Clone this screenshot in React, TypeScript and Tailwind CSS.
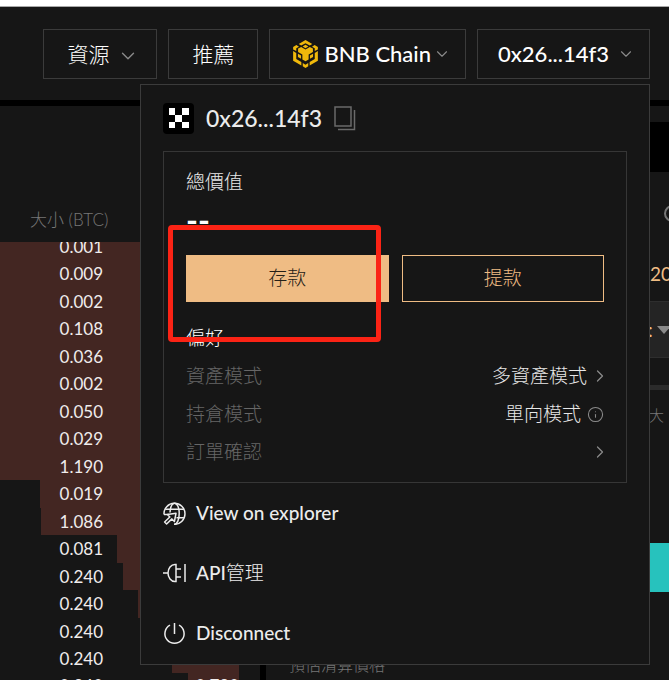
import React from 'react';
import { ChevronDown, ChevronRight, Info } from 'lucide-react';

const asks = [
  { size: '0.001', depth: 240 },
  { size: '0.009', depth: 240 },
  { size: '0.002', depth: 240 },
  { size: '0.108', depth: 240 },
  { size: '0.036', depth: 240 },
  { size: '0.002', depth: 240 },
  { size: '0.050', depth: 240 },
  { size: '0.029', depth: 240 },
  { size: '1.190', depth: 240 },
  { size: '0.019', depth: 200 },
  { size: '1.086', depth: 199 },
  { size: '0.081', depth: 123 },
  { size: '0.240', depth: 117 },
  { size: '0.240', depth: 101 },
  { size: '0.240', depth: 84 },
  { size: '0.240', depth: 67 },
  { size: '0.240', depth: 51, total: '0.720' },
];

const MAX_DEPTH = 240;

const BnbLogo = () => (
  <svg width="25" height="28" viewBox="0 0 38 43" fill="#f0b90b" aria-hidden="true">
    <path d="M8.600 6 19 0l10.400 6-3.800 2.300L19 4.900l-6.600 3.400z" />
    <path d="M14.600 10 19 7.400l4.400 2.600L19 12.600z" />
    <path d="M30.400 13l-4.800-2.200L19 14.600l-6.600-3.800L7.600 13v5.500l6.600 3.800v7.700l4.800 2.700 4.800-2.700v-7.700l6.600-3.800z" />
    <path d="M0 10.700 5 7.600l4 2.600-4.200 2.600v4L0 14.500zM38 10.700 33 7.600l-4 2.600 4.200 2.600v4L38 14.500z" />
    <path d="M0 17l4.800 2.800v9.200l7.800 4.600v5.400L0 32zM38 17l-4.800 2.800v9.200l-7.800 4.600v5.400L38 32z" />
    <path d="M7.400 21l4.800 2.700v5L7.400 26zM30.600 21l-4.800 2.700v5l4.800-2.700z" />
    <path d="M14.800 35.400l4.200 2.500 4.200-2.500v5.100L19 43l-4.200-2.500z" />
  </svg>
);

const WalletLogo = () => (
  <svg width="31" height="31" viewBox="0 0 31 31" aria-hidden="true">
    <rect width="31" height="31" rx="4" fill="#000" />
    <path
      fill="#fff"
      d="M6 5h6v7H6zM19 5h7v7h-7zM12 12h7v7h-7zM6 19h6v6H6zM19 19h7v6h-7z"
    />
  </svg>
);

const CopyIcon = () => (
  <svg width="22" height="25" viewBox="0 0 22 25" fill="none" stroke="#6a6a6a" strokeWidth="1.5" aria-hidden="true">
    <path d="M1 1h16v19H1zM20.500 4v19.500H4" />
  </svg>
);

const GlobeIcon = () => (
  <svg width="23" height="23" viewBox="0 0 23 23" fill="none" stroke="currentColor" strokeWidth="1.500" aria-hidden="true">
    <path d="M1 12.500A10.500 10.500 0 1 1 11 22.300" />
    <path d="M7 10.500C7.400 5 9 1.200 11.600 1.200c2.800 0 4.600 4.500 4.600 10.300 0 6-2 10.800-4.800 10.800" />
    <path d="M2.500 7.200h18.200M1 12.500h5M13.500 15.800h7.400" />
    <path d="M4.500 12.500l8.500-1.200-1.600 8.200-2.500-2.600L3.600 22l-2-2 5.200-5z" strokeLinejoin="round" />
  </svg>
);

const PlugIcon = () => (
  <svg width="23" height="20" viewBox="0 0 23 20" fill="none" stroke="currentColor" strokeWidth="1.500" aria-hidden="true">
    <path d="M0 10h5M13 1.500V18.500h-1C8 18.500 5 14.500 5 10s3-8.500 7-8.500zM13 6h5M13 14h5M22 1v18" />
  </svg>
);

const PowerIcon = () => (
  <svg width="23" height="23" viewBox="0 0 23 23" fill="none" stroke="currentColor" strokeWidth="1.500" aria-hidden="true">
    <path d="M11.500 1v11M7 3.200a9.600 9.600 0 1 0 9 0" />
  </svg>
);

const Header = () => (
  <header className="flex shrink-0 justify-end gap-[11px] border-b-[6px] border-black pt-[22px] pr-[19px] pb-[21px] text-[22px] text-white">
    <button className="flex h-[50px] items-center gap-2 border border-[#3b3b3b] pr-[17px] pl-[23px] font-light">
      <span className="text-[21px] leading-6">資源</span>
      <ChevronDown size={22} strokeWidth={1.5} className="mt-1 text-[#8a8a8a]" />
    </button>
    <button className="h-[50px] border border-[#3b3b3b] px-[23px] text-[21px] leading-6 font-light">推薦</button>
    <button className="flex h-[50px] items-center border border-[#3b3b3b] pr-[14px] pl-[23px]">
      <BnbLogo />
      <span className="ml-[6px] leading-6 font-medium">BNB Chain</span>
      <ChevronDown size={18} strokeWidth={1.5} className="ml-[2px] text-[#8a8a8a]" />
    </button>
    <button
      aria-expanded="true"
      className="flex h-[50px] items-center gap-2 border border-[#3b3b3b] pr-[14px] pl-[20px]"
    >
      <span className="leading-6 font-medium">0x26...14f3</span>
      <ChevronDown size={18} strokeWidth={1.5} className="text-[#8a8a8a]" />
    </button>
  </header>
);

const OrderBook = () => (
  <section className="flex w-[260px] shrink-0 flex-col pr-[21px]">
    <div className="flex h-[136px] shrink-0 items-end pb-[10px] pl-[30px] text-[17px] leading-6 font-light text-[#777777]">
      大小 (BTC)
    </div>
    <div className="flex min-h-0 flex-1 flex-col overflow-hidden">
      <ul className="-mt-[9px] -mb-5 flex flex-1 flex-col text-[17px] text-[#f0ecec]">
        {asks.map((row, i) => (
          <li key={i} className="relative flex flex-1 items-center">
            <span
              className="absolute inset-y-0 right-0 bg-[#432622]"
              style={{ width: `${(row.depth / MAX_DEPTH) * 100}%` }}
            />
            <span className="relative w-[103px] text-right">{row.size}</span>
            {row.total && <span className="relative flex-1 text-right">{row.total}</span>}
          </li>
        ))}
      </ul>
    </div>
  </section>
);

const OrderForm = () => (
  <section className="flex flex-1 flex-col overflow-hidden whitespace-nowrap">
    <div className="mt-4 h-[50px] bg-black" />
    <div className="ml-auto flex h-[82px] w-[19px] items-center pl-[14px]">
      <span className="size-[17px] shrink-0 rounded-full border-2 border-[#777777]" />
    </div>
    <div className="ml-auto h-[47px] w-[19px] pt-[8px] text-[19px] leading-6 text-[#f0bd84]">20</div>
    <div className="ml-auto flex h-[57px] w-[21px] items-center gap-1 border-y border-[#2e2e2e] bg-[#242424] text-[19px] leading-6 text-[#f0bd84]">
      <span>:</span>
      <svg width="14" height="8" viewBox="0 0 14 8" className="shrink-0" aria-hidden="true">
        <path d="M0 0h14L7 8z" fill="#8a8a8a" />
      </svg>
    </div>
    <div className="mt-[27px] h-[5px] bg-[#2b2b2b]" />
    <div className="ml-auto h-[153px] w-[20px] pt-[13px] text-[15px] leading-6 font-light text-[#777777]">大</div>
    <button aria-label="下單" className="ml-auto h-[49px] w-[19px] bg-[#27c2bd]" />
    <div className="mt-[61px] pl-[23px] text-[16px] leading-6 font-light text-[#777777]">預估清算價格</div>
  </section>
);

const AccountCard = () => (
  <div className="border border-[#363636] px-[22px] pt-[18px] pb-[11px] text-[19px] font-light text-[#e8e8e8]">
    <h2 className="leading-6">總價值</h2>
    <p className="mt-[12px] h-[49px] text-[32px] leading-7 font-bold text-white">--</p>
    <div className="grid grid-cols-2 gap-[13px]">
      <button className="h-[47px] bg-[#efbc84] text-[#252017]">存款</button>
      <button className="h-[47px] border border-[#efbc84] text-[#efbc84]">提款</button>
    </div>
    <h2 className="mt-6 leading-6 text-white">偏好</h2>
    <dl className="mt-[7px]">
      <div className="flex h-[38px] items-center justify-between">
        <dt className="text-[#666666]">資產模式</dt>
        <dd>
          <button className="flex items-center">
            多資產模式 <ChevronRight size={20} strokeWidth={1.5} className="ml-[3px] -mr-[6px] text-[#8a8a8a]" />
          </button>
        </dd>
      </div>
      <div className="flex h-[38px] items-center justify-between">
        <dt className="text-[#666666]">持倉模式</dt>
        <dd className="flex items-center gap-[6px]">
          單向模式 <Info size={17} strokeWidth={1.5} className="text-[#8a8a8a]" />
        </dd>
      </div>
      <div className="flex h-[38px] items-center justify-between">
        <dt className="text-[#666666]">訂單確認</dt>
        <dd>
          <button aria-label="訂單確認" className="block">
            <ChevronRight size={20} strokeWidth={1.5} className="-mr-[6px] text-[#8a8a8a]" />
          </button>
        </dd>
      </div>
    </dl>
  </div>
);

const WalletMenu = () => (
  <div className="absolute top-[78px] right-[19px] w-[510px] border border-[#3b3b3b] bg-[#161616] px-[22px] pt-[17px] pb-px text-[#ececec]">
    <div className="mb-[17px] flex items-center">
      <WalletLogo />
      <span className="mr-3 ml-3 text-[23px] leading-8 font-medium">0x26...14f3</span>
      <button aria-label="複製">
        <CopyIcon />
      </button>
    </div>
    <AccountCard />
    <nav className="text-[19px] font-medium">
      <a href="#explorer" className="flex h-[60px] items-center gap-[10px]">
        <GlobeIcon />
        View on explorer
      </a>
      <a href="#api" className="flex h-[60px] items-center gap-[10px]">
        <PlugIcon />
        <span>
          API<span className="font-light">管理</span>
        </span>
      </a>
      <button className="flex h-[60px] items-center gap-[10px]">
        <PowerIcon />
        Disconnect
      </button>
    </nav>
    {/* highlight around the deposit button */}
    <div className="pointer-events-none absolute top-[140px] left-[27px] h-[117px] w-[213px] rounded-[4px] border-[5px] border-[#fb2315]" />
  </div>
);

export default function App() {
  return (
    <div className="relative flex h-screen flex-col overflow-hidden border-t-[6px] border-white bg-[#161616] font-['Lato','Noto_Sans_CJK_TC',sans-serif]">
      <div className="h-px shrink-0 bg-[#a8a8a8]" />
      <Header />
      <main className="flex min-h-0 flex-1">
        <OrderBook />
        <div className="w-[6px] shrink-0 bg-black" />
        <OrderForm />
      </main>
      <WalletMenu />
    </div>
  );
}
